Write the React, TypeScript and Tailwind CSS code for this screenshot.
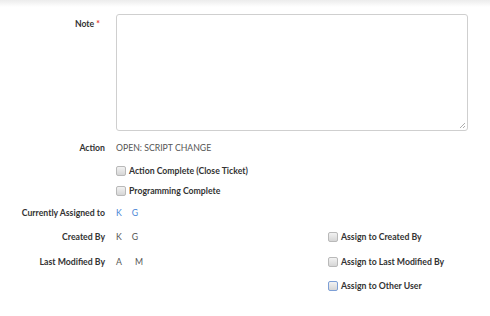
import type { ReactNode } from "react";

const FONT = { fontFamily: "Lato, 'Open Sans', sans-serif" };

function Box({ focused = false }: { focused?: boolean }) {
  return (
    <span
      className={
        "inline-block size-[10px] shrink-0 rounded-[2px] border bg-gradient-to-b from-[#f2f2f2] to-[#d6d6d6] " +
        (focused ? "border-[#7d9fd6]" : "border-[#b9b9b9]")
      }
    />
  );
}

function Check({ label, focused }: { label: string; focused?: boolean }) {
  return (
    <span className="flex items-center gap-[3px]">
      <Box focused={focused} />
      <span className="text-[8.7px] font-bold text-[#333]">{label}</span>
    </span>
  );
}

function Row({ label, children, className = "" }: { label?: ReactNode; children?: ReactNode; className?: string }) {
  return (
    <div className={"grid h-[20px] grid-cols-[105px_1fr] items-center gap-x-[11px] " + className}>
      <div className="text-right text-[8.7px] font-bold text-[#333]">{label}</div>
      <div className="flex items-center">{children}</div>
    </div>
  );
}

function Person({ a, b, gap = "gap-[10px]", link = false }: { a: string; b: string; gap?: string; link?: boolean }) {
  return (
    <span className={"flex w-[212px] text-[8.7px] " + gap + " " + (link ? "text-[#4a86d6]" : "text-[#555]")}>
      <span>{a}</span>
      <span>{b}</span>
    </span>
  );
}

export default function App() {
  return (
    <div style={FONT} className="h-[316px] w-[490px] overflow-hidden bg-white">
      <div className="h-[7px] bg-gradient-to-b from-[#ececec] to-white" />
      <div className="grid grid-cols-[105px_1fr] gap-x-[11px] pt-[7px]">
        <div className="pt-[3px] pr-[5px] text-right text-[8.7px] font-bold text-[#333]">
          Note <span className="text-[#e53935]">*</span>
        </div>
        <div className="relative h-[117px] w-[352px] rounded-[3px] border border-[#cfcfcf]">
          <svg className="absolute right-[1px] bottom-[1px]" width="7" height="7" viewBox="0 0 7 7">
            <path d="M6 1L1 6M6 4L4 6" stroke="#999" strokeWidth="0.8" />
          </svg>
        </div>
      </div>
      <Row label="Action" className="mt-[7px]">
        <span className="text-[8.7px] text-[#555]">OPEN: SCRIPT CHANGE</span>
      </Row>
      <Row className="mt-[3px]">
        <Check label="Action Complete (Close Ticket)" />
      </Row>
      <Row>
        <Check label="Programming Complete" />
      </Row>
      <Row label="Currently Assigned to" className="mt-[2px]">
        <Person a="K" b="G" link />
      </Row>
      <Row label="Created By" className="mt-[4px]">
        <Person a="K" b="G" />
        <Check label="Assign to Created By" />
      </Row>
      <Row label="Last Modified By" className="mt-[5px]">
        <Person a="A" b="M" gap="gap-[13px]" />
        <Check label="Assign to Last Modified By" />
      </Row>
      <Row className="mt-[4px]">
        <span className="w-[212px]" />
        <Check label="Assign to Other User" focused />
      </Row>
    </div>
  );
}
